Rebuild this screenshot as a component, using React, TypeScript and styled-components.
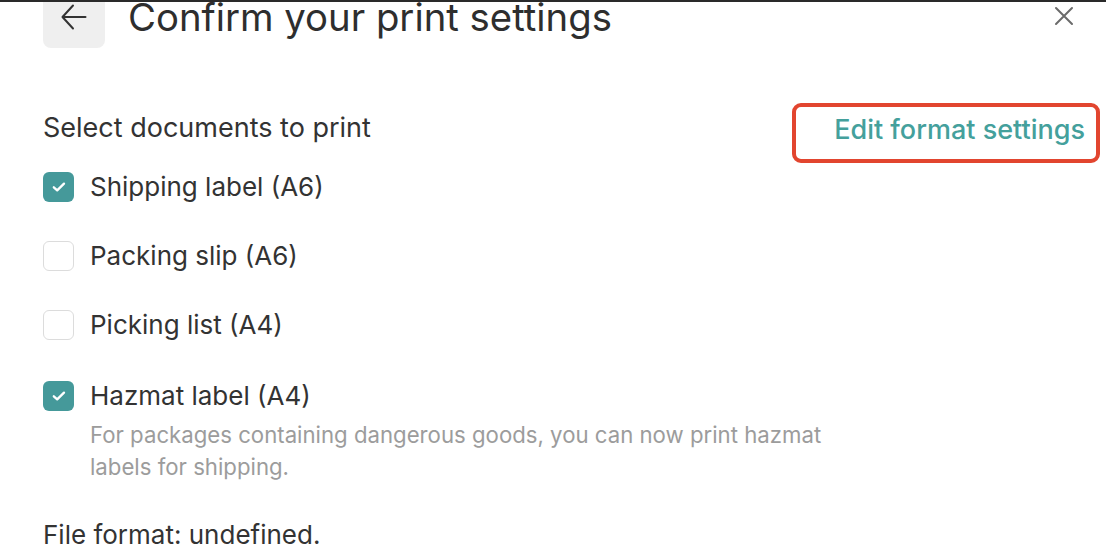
import React from "react";
import styled, { createGlobalStyle } from "styled-components";

const GlobalStyle = createGlobalStyle`
  html, body {
    margin: 0;
    padding: 0;
    background: #ffffff;
  }
  body {
    font-family: Inter, "Noto Sans", "Liberation Sans", sans-serif;
    color: #333333;
  }
`;

const Dialog = styled.div`
  width: 1106px;
  height: 560px;
  box-sizing: border-box;
  border-top: 2px solid #2a2a2a;
  overflow: hidden;
  display: flex;
  flex-direction: column;
`;

const Header = styled.div`
  display: flex;
  align-items: flex-start;
  padding: 0 32px 0 43px;
  height: 46px;
`;

const BackButton = styled.button`
  width: 62px;
  height: 46px;
  border: none;
  background: #efefef;
  border-radius: 0 0 8px 8px;
  display: flex;
  align-items: flex-start;
  justify-content: center;
  padding: 1px 0 0;
  color: #333;
  cursor: pointer;
`;

const Title = styled.h1`
  margin: 0 0 0 23px;
  font-size: 38.3px;
  font-weight: 400;
  line-height: 30px;
  color: #2e2e2e;
  flex: 1;
  white-space: nowrap;
`;

const CloseButton = styled.button`
  border: none;
  background: none;
  padding: 4px 0 0;
  color: #6b6b6b;
  cursor: pointer;
  display: flex;
`;

const Body = styled.div`
  padding: 55px 6px 0 43px;
  display: flex;
  flex-direction: column;
`;

const SectionHead = styled.div`
  display: flex;
  justify-content: space-between;
  align-items: flex-start;
`;

const SectionTitle = styled.h2`
  margin: 10px 0 0;
  font-size: 27px;
  font-weight: 400;
  color: #333;
  line-height: 30px;
`;

const Highlight = styled.div`
  border: 4px solid #e2452f;
  border-radius: 9px;
  padding: 8px 11px 14px 38px;
`;

const LinkButton = styled.a`
  font-size: 27px;
  font-weight: 500;
  color: #44a09c;
  text-decoration: none;
  line-height: 30px;
  display: block;
  white-space: nowrap;
`;

const OptionList = styled.div`
  display: flex;
  flex-direction: column;
  gap: 39px;
  margin-top: 9px;
`;

const Option = styled.label<{ $withHint?: boolean }>`
  display: grid;
  grid-template-columns: 31px 1fr;
  column-gap: 16px;
  align-items: center;
  cursor: pointer;
  margin-top: ${(p) => (p.$withHint ? "2px" : "0")};
`;

const Box = styled.span<{ $checked: boolean }>`
  width: 31px;
  height: 30px;
  box-sizing: border-box;
  border-radius: 6px;
  border: ${(p) => (p.$checked ? "none" : "1.5px solid #dcdcdc")};
  background: ${(p) => (p.$checked ? "#45999a" : "#ffffff")};
  display: flex;
  align-items: center;
  justify-content: center;
`;

const OptionLabel = styled.span`
  font-size: 26px;
  line-height: 30px;
  color: #333;
`;

const OptionHint = styled.p`
  grid-column: 2;
  margin: 8px 0 0;
  font-size: 22.2px;
  line-height: 32px;
  color: #9c9c9c;
  max-width: 760px;
`;

const FileFormat = styled.p`
  margin: 37px 0 0;
  font-size: 26px;
  line-height: 30px;
  color: #333;
`;

type Doc = { label: string; checked: boolean; hint?: string };

const docs: Doc[] = [
  { label: "Shipping label (A6)", checked: true },
  { label: "Packing slip (A6)", checked: false },
  { label: "Picking list (A4)", checked: false },
  {
    label: "Hazmat label (A4)",
    checked: true,
    hint: "For packages containing dangerous goods, you can now print hazmat labels for shipping.",
  },
];

const Check = () => (
  <svg width="18" height="18" viewBox="0 0 18 18" fill="none">
    <path d="M3.8 9.3l3.4 3.1L14 5.6" stroke="#fff" strokeWidth="2.3" strokeLinecap="round" strokeLinejoin="round" />
  </svg>
);

export default function App() {
  return (
    <>
      <GlobalStyle />
      <Dialog>
        <Header>
          <BackButton aria-label="Back">
            <svg width="26" height="28" viewBox="0 0 26 28" fill="none" stroke="#333" strokeWidth="2" strokeLinecap="round" strokeLinejoin="round">
              <path d="M24.5 14H2" />
              <path d="M12 2.5L1.5 14L12 25.5" />
            </svg>
          </BackButton>
          <Title>Confirm your print settings</Title>
          <CloseButton aria-label="Close">
            <svg width="20" height="20" viewBox="0 0 20 20" fill="none" stroke="#6b6b6b" strokeWidth="2" strokeLinecap="round">
              <path d="M2 2l16 16M18 2L2 18" />
            </svg>
          </CloseButton>
        </Header>
        <Body>
          <SectionHead>
            <SectionTitle>Select documents to print</SectionTitle>
            <Highlight>
              <LinkButton href="#">Edit format settings</LinkButton>
            </Highlight>
          </SectionHead>
          <OptionList>
            {docs.map((d) => (
              <Option key={d.label} $withHint={!!d.hint}>
                <Box $checked={d.checked}>{d.checked && <Check />}</Box>
                <OptionLabel>{d.label}</OptionLabel>
                {d.hint && <OptionHint>{d.hint}</OptionHint>}
              </Option>
            ))}
          </OptionList>
          <FileFormat>File format: undefined.</FileFormat>
        </Body>
      </Dialog>
    </>
  );
}
